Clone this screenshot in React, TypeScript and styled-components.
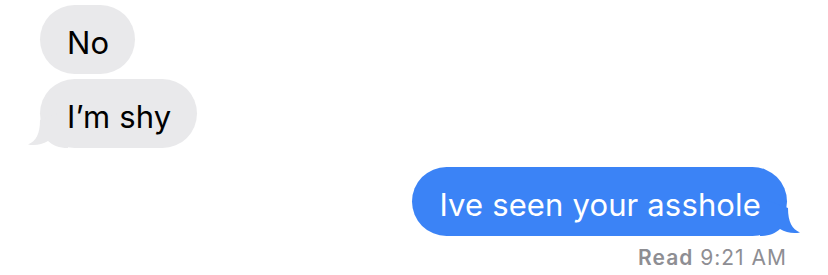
import React from "react";
import styled, { createGlobalStyle } from "styled-components";

const Global = createGlobalStyle`
  html, body { margin: 0; padding: 0; background: #ffffff; }
  body { font-family: Inter, "Liberation Sans", sans-serif; -webkit-font-smoothing: antialiased; }
`;

const Thread = styled.div`
  display: flex;
  flex-direction: column;
  padding: 5px 41px 0 40px;
  width: 828px;
  height: 275px;
  box-sizing: border-box;
  overflow: hidden;
`;

const Group = styled.div<{ $side: "in" | "out" }>`
  display: flex;
  flex-direction: column;
  align-items: ${(p) => (p.$side === "in" ? "flex-start" : "flex-end")};
  gap: 5px;
  margin-top: ${(p) => (p.$side === "in" ? "0" : "19px")};
`;

const Bubble = styled.div<{ $side: "in" | "out" }>`
  position: relative;
  box-sizing: border-box;
  height: 69px;
  padding: 0 26px 0 27px;
  border-radius: 35px;
  display: flex;
  align-items: center;
  font-size: 31px;
  line-height: 36px;
  letter-spacing: 0.15px;
  background: ${(p) => (p.$side === "in" ? "#e9e9eb" : "#3b83f6")};
  color: ${(p) => (p.$side === "in" ? "#000000" : "#ffffff")};
`;

const Text = styled.span`
  position: relative;
  top: 3px;
`;

const Tail = styled.svg<{ $side: "in" | "out" }>`
  position: absolute;
  bottom: 0;
  width: 40px;
  height: 36px;
  ${(p) => (p.$side === "in" ? "left: -12px;" : "right: -13px; transform: scaleX(-1);")}
`;

const Receipt = styled.div`
  align-self: flex-end;
  margin-top: 9px;
  font-size: 21px;
  line-height: 25px;
  color: #8e8e93;
  letter-spacing: 1px;
`;

const Strong = styled.span`
  font-weight: 600;
`;

function BubbleTail({ side }: { side: "in" | "out" }) {
  return (
    <Tail $side={side} viewBox="0 0 40 36">
      <path
        d="M34 0 L12 8 C12 22 8 29 0 32.5 C7 34 14 32.5 20 29 C25 33.5 31 36 40 36 L40 0 Z"
        fill={side === "in" ? "#e9e9eb" : "#3b83f6"}
      />
    </Tail>
  );
}

export default function App() {
  return (
    <>
      <Global />
      <Thread>
        <Group $side="in">
          <Bubble $side="in">
            <Text>No</Text>
          </Bubble>
          <Bubble $side="in">
            <Text>I’m shy</Text>
            <BubbleTail side="in" />
          </Bubble>
        </Group>
        <Group $side="out">
          <Bubble $side="out">
            <Text>Ive seen your asshole</Text>
            <BubbleTail side="out" />
          </Bubble>
        </Group>
        <Receipt>
          <Strong>Read</Strong> 9:21 AM
        </Receipt>
      </Thread>
    </>
  );
}
